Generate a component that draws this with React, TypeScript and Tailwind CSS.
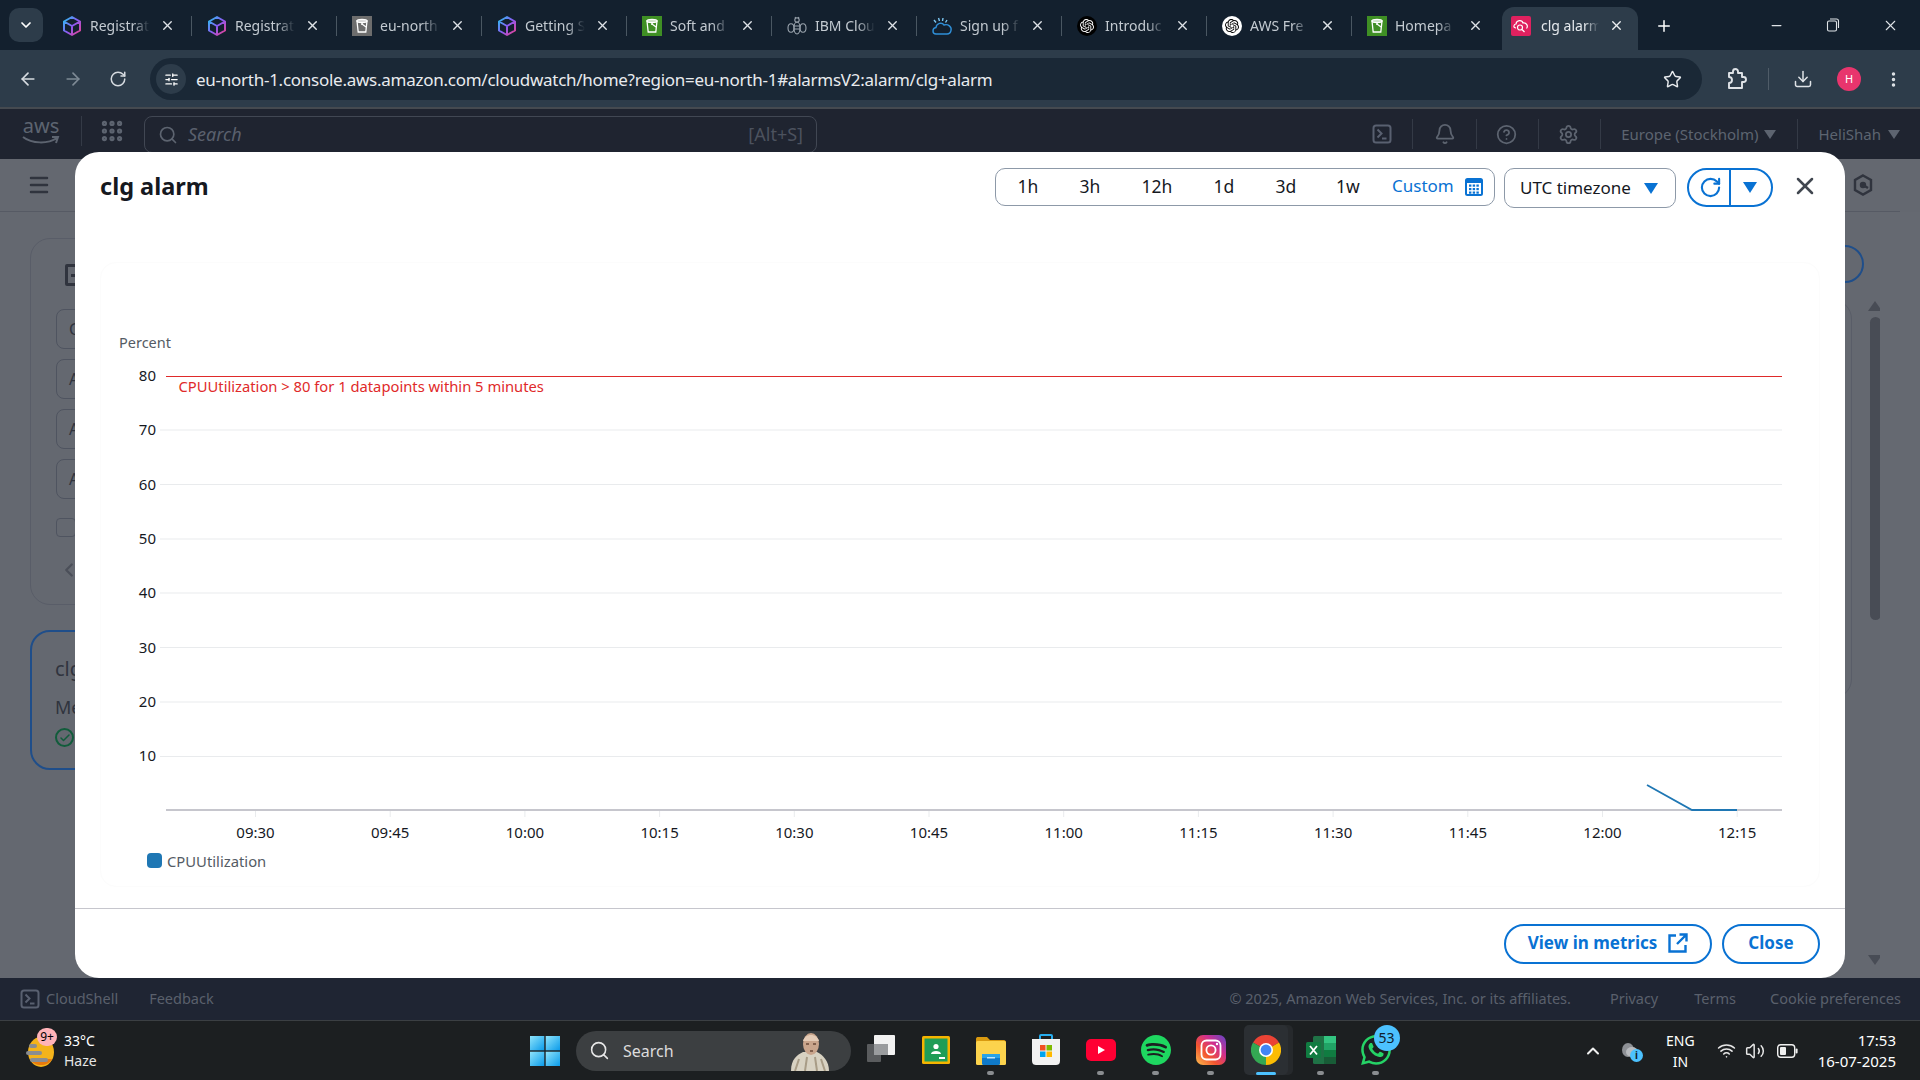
import React from "react";
import { ArrowLeft, ArrowRight, RotateCw, Star, Download, MoreVertical, Plus, X, Minus, ChevronDown, ChevronUp, ChevronLeft, Search, Bell, HelpCircle, Settings, Menu, Volume2, Wifi, SlidersHorizontal, Check, Grip } from "lucide-react";
import { SiOpenai, SiSpotify, SiWhatsapp } from "react-icons/si";

const FONT = { fontFamily: '"Noto Sans", "Open Sans", sans-serif' };

function Caret({ w, h, color, up }: { w: number; h: number; color: string; up?: boolean }) {
  return (
    <svg width={w} height={h} viewBox="0 0 10 10" preserveAspectRatio="none" className="block shrink-0">
      <path d={up ? "M0 10 L5 0 L10 10 Z" : "M0 0 L10 0 L5 10 Z"} fill={color} />
    </svg>
  );
}

function Cube() {
  return (
    <svg width="20" height="22" viewBox="0 0 20 22" fill="none">
      <defs>
        <linearGradient id="cubeg" x1="0" y1="0" x2="1" y2="1">
          <stop offset="0" stopColor="#22c6ee" />
          <stop offset="0.5" stopColor="#8a5cf6" />
          <stop offset="1" stopColor="#ec3f8c" />
        </linearGradient>
      </defs>
      <path d="M10 2 L18 6.5 V15.5 L10 20 L2 15.5 V6.5 Z M2 6.5 L10 11 L18 6.5 M10 11 V20" stroke="url(#cubeg)" strokeWidth="2" strokeLinejoin="round" />
    </svg>
  );
}
function Bucket({ bg }: { bg: string }) {
  return (
    <svg width="20" height="20" viewBox="0 0 20 20">
      <rect width="20" height="20" fill={bg} />
      <path d="M5 5 H15 L13.8 16 H6.2 Z" fill="none" stroke="#fff" strokeWidth="1.3" />
      <ellipse cx="10" cy="5" rx="5" ry="1.6" fill="none" stroke="#fff" strokeWidth="1.2" />
      <path d="M10 8 L14 11" stroke="#fff" strokeWidth="1.2" />
      <circle cx="10" cy="8" r="1" fill="#fff" />
    </svg>
  );
}
function Bee() {
  return (
    <svg width="22" height="22" viewBox="0 0 22 22" fill="none" stroke="#9aa3ad" strokeWidth="1.1">
      <circle cx="11" cy="5" r="2.2" />
      <ellipse cx="11" cy="13" rx="3" ry="6" />
      <path d="M8 11 H14 M8 14 H14" />
      <ellipse cx="5" cy="13" rx="3" ry="4.2" />
      <ellipse cx="17" cy="13" rx="3" ry="4.2" />
      <path d="M9 2 L10 3.5 M13 2 L12 3.5" />
    </svg>
  );
}
function CloudFav() {
  return (
    <svg width="22" height="22" viewBox="0 0 22 22" fill="none" stroke="#2f8fd8" strokeWidth="1.4">
      <path d="M5 19 C1 19 1 13 5 12.5 C5.5 8 11 7 13 10 C17 8.5 21 12 20 15.5 C19.5 18 18 19 16 19 Z" />
      <path d="M3 5 L5 7.5 M7.5 3 L8.5 6 M12 3 L11.5 6 M16 5 L14.5 7.5" stroke="#7cc7f2" />
    </svg>
  );
}
function Knot({ dark }: { dark: boolean }) {
  return (
    <span className={`flex h-[20px] w-[20px] items-center justify-center rounded-full ${dark ? "bg-black text-white" : "bg-white text-black"}`}>
      <SiOpenai size={14} />
    </span>
  );
}
function WatchFav() {
  return (
    <svg width="20" height="20" viewBox="0 0 20 20">
      <rect width="20" height="20" rx="2" fill="#e0215f" />
      <path d="M5 12 C2 12 2.5 8 5 8 C5.5 4 11 3.5 12 7 C15.5 6.5 17.5 10 15.5 12.5" fill="none" stroke="#fff" strokeWidth="1.2" />
      <circle cx="9" cy="11.5" r="2.5" fill="none" stroke="#fff" strokeWidth="1.2" />
      <path d="M11 13.5 L13.5 16" stroke="#fff" strokeWidth="1.2" />
    </svg>
  );
}

const tabs: { label: string; icon: React.ReactNode }[] = [
  { label: "Registrat", icon: <Cube /> },
  { label: "Registrat", icon: <Cube /> },
  { label: "eu-north", icon: <Bucket bg="#6d6d6d" /> },
  { label: "Getting S", icon: <Cube /> },
  { label: "Soft and", icon: <Bucket bg="#3f8f24" /> },
  { label: "IBM Clou", icon: <Bee /> },
  { label: "Sign up f", icon: <CloudFav /> },
  { label: "Introduc", icon: <Knot dark /> },
  { label: "AWS Fre", icon: <Knot dark={false} /> },
  { label: "Homepa", icon: <Bucket bg="#3f8f24" /> },
];

function Tab({ label, icon, last }: { label: string; icon: React.ReactNode; last: boolean }) {
  return (
    <div className="flex h-[43px] w-[145px] shrink-0 items-center pb-[6px] pl-[14px] pr-[14px]">
      <span className="flex w-[22px] shrink-0 justify-center">{icon}</span>
      <span className="ml-[7px] w-[60px] whitespace-nowrap text-[14px] text-[#c3cad1] [mask-image:linear-gradient(to_right,black_70%,transparent_100%)]">{label}</span>
      <X size={15} strokeWidth={2.2} className="ml-auto text-[#dfe3e7]" />
      {!last && <span className="ml-[16px] -mr-[14px] h-[20px] w-px bg-[#4a5762]" />}
    </div>
  );
}

function TabBar() {
  return (
    <div className="flex h-[50px] shrink-0 items-end bg-[#13202e] pl-[9px]">
      <div className="mb-[8px] mr-[4px] flex h-[34px] w-[34px] items-center justify-center rounded-[10px] bg-[#2d3c4a]">
        <ChevronDown size={16} strokeWidth={2.6} className="text-white" />
      </div>
      <div className="flex">
        {tabs.map((t, i) => (
          <Tab key={i} label={t.label} icon={t.icon} last={i === tabs.length - 1} />
        ))}
      </div>
      <div className="ml-[5px] flex h-[43px] w-[136px] shrink-0 items-center rounded-t-[12px] bg-[#2d3c4a] pb-[6px] pl-[9px] pr-[14px]">
        <WatchFav />
        <span className="ml-[10px] w-[58px] whitespace-nowrap text-[14px] text-[#e4e8ec] [mask-image:linear-gradient(to_right,black_75%,transparent_100%)]">clg alarm</span>
        <X size={15} strokeWidth={2.2} className="ml-auto text-[#eef0f2]" />
      </div>
      <div className="flex h-[43px] w-[52px] items-center justify-center pb-[6px]">
        <Plus size={18} strokeWidth={2} className="text-white" />
      </div>
      <div className="ml-auto flex h-[50px] items-center pr-[21px] text-[#dfe3e7]">
        <Minus size={15} className="mr-[42px]" />
        <svg width="14" height="14" viewBox="0 0 14 14" fill="none" stroke="currentColor" strokeWidth="1.1" className="mr-[42px]">
          <rect x="1.5" y="3" width="9" height="10" rx="1.5" />
          <path d="M4 1 H10.5 A2 2 0 0 1 12.5 3 V10" />
        </svg>
        <X size={17} strokeWidth={1.5} />
      </div>
    </div>
  );
}

function ExtIcon() {
  return (
    <svg width="22" height="24" viewBox="0 0 22 24" fill="none" stroke="currentColor" strokeWidth="1.9" strokeLinejoin="round">
      <path d="M4 6 H8 V4.5 A2.5 2.5 0 0 1 13 4.5 V6 H17 V10 H18.5 A2.5 2.5 0 0 1 18.5 15 H17 V21 H4 V16 C6 16 7 14.5 7 13 C7 11.5 6 10 4 10 Z" />
    </svg>
  );
}

function Toolbar() {
  return (
    <div className="flex h-[59px] shrink-0 items-start border-b-2 border-[#454a50] bg-[#2d3c4a] pt-[8px]">
      <div className="flex h-[42px] w-[150px] shrink-0 items-center pl-[18px] text-[#d6dbe0]">
        <ArrowLeft size={20} strokeWidth={2} />
        <ArrowRight size={20} strokeWidth={2} className="ml-[25px] text-[#7e8a95]" />
        <RotateCw size={18} strokeWidth={2} className="ml-[26px]" />
      </div>
      <div className="flex h-[42px] w-[1552px] shrink-0 items-center rounded-full bg-[#1a2836] pl-[6px] pr-[20px]">
        <span className="flex h-[30px] w-[30px] items-center justify-center rounded-full bg-[#2d3c4a]">
          <SlidersHorizontal size={15} className="text-white" />
        </span>
        <span className="ml-[10px] mt-[1px] text-[17px] tracking-[-0.26px] text-[#e8ebee]">eu-north-1.console.aws.amazon.com/cloudwatch/home?region=eu-north-1#alarmsV2:alarm/clg+alarm</span>
        <Star size={19} strokeWidth={1.8} className="ml-auto text-[#e8ebee]" />
      </div>
      <div className="flex h-[42px] flex-1 items-center pl-[23px] text-[#dfe3e7]">
        <ExtIcon />
        <span className="ml-[21px] h-[22px] w-px bg-[#4f5c68]" />
        <Download size={20} strokeWidth={1.8} className="ml-[24px]" />
        <span className="ml-[24px] flex h-[24px] w-[24px] items-center justify-center rounded-full bg-[#e8356d] text-[11px] text-white">H</span>
        <MoreVertical size={19} strokeWidth={2.4} className="ml-[23px]" />
      </div>
    </div>
  );
}

function NavSep() {
  return <span className="block h-[30px] w-px bg-[#343a46]" />;
}

function TermIcon({ size = 20 }: { size?: number }) {
  return (
    <svg width={size} height={size} viewBox="0 0 20 20" fill="none" stroke="#596070" strokeWidth="2">
      <rect x="1.5" y="1.5" width="17" height="17" rx="2.5" />
      <path d="M5.5 5.5 L9.5 9.5 L5.5 13.5 M10 14.5 H14.5" />
    </svg>
  );
}

function AwsNav() {
  return (
    <div className="flex h-[50px] shrink-0 items-start bg-[#1f2430] pt-[7px] text-[#5d6470]">
      <div className="relative ml-[22px] w-[38px] text-center">
        <div className="text-[20px] leading-[20px] text-[#5d6470]">aws</div>
        <svg width="38" height="10" viewBox="0 0 38 10" fill="none" className="absolute left-0 top-[19px]">
          <path d="M1 2 C10 9 26 9 35 3 M30 2 L36 2 L34 8" stroke="#5d6470" strokeWidth="2" />
        </svg>
      </div>
      <span className="ml-[21px] h-[30px] w-px bg-[#343a46]" />
      <Grip size={26} strokeWidth={2.8} className="ml-[17px] mt-[2px]" />
      <div className="ml-[19px] flex h-[37px] w-[673px] items-center rounded-[8px] border border-[#414753] px-[13px]">
        <Search size={20} strokeWidth={2} />
        <span className="ml-[10px] text-[18px] italic text-[#5a606d]">Search</span>
        <span className="ml-auto text-[18px] text-[#4c525e]">[Alt+S]</span>
      </div>
      <div className="ml-auto mt-[3px] flex h-[30px] items-center">
        <TermIcon />
        <span className="ml-[20px]"><NavSep /></span>
        <Bell size={22} strokeWidth={2} className="ml-[21px]" />
        <span className="ml-[20px]"><NavSep /></span>
        <HelpCircle size={21} strokeWidth={2} className="ml-[19px]" />
        <span className="ml-[21px]"><NavSep /></span>
        <Settings size={21} strokeWidth={2} className="ml-[19px]" />
        <span className="ml-[21px]"><NavSep /></span>
        <span className="ml-[20px] text-[15px]">Europe (Stockholm)</span>
        <span className="ml-[6px]"><Caret w={12} h={9} color="#5d6470" /></span>
        <span className="ml-[21px]"><NavSep /></span>
        <span className="ml-[20px] text-[15px]">HeliShah</span>
        <span className="ml-[7px] mr-[20px]"><Caret w={12} h={9} color="#5d6470" /></span>
      </div>
    </div>
  );
}

function PageBehind() {
  return (
    <div className="flex h-full flex-1 flex-col bg-[#646870]">
      <div className="flex h-[53px] w-[1900px] shrink-0 items-center justify-between border-b border-[#565a64] pl-[27px] pr-[27px]">
        <Menu size={24} strokeWidth={2.5} className="text-[#30343e]" />
        <svg width="20" height="22" viewBox="0 0 20 22" fill="none" stroke="#30343e" strokeWidth="2.4">
          <path d="M10 1.5 L18 6 V16 L10 20.5 L2 16 V6 Z" />
          <circle cx="10" cy="11" r="2" fill="#30343e" />
          <path d="M10 11 L15 14" />
        </svg>
      </div>
      <div className="flex flex-1">
        <div className="ml-[30px] w-[900px] shrink-0 pt-[26px]">
          <div className="h-[367px] rounded-[20px] border border-[#595d68] pl-[25px] pr-[20px] pt-[25px]">
            <div className="ml-[9px] flex h-[22px] w-[22px] items-center justify-center rounded-[2px] border-[3px] border-[#30343e]">
              <span className="h-[3px] w-[10px] bg-[#30343e]" />
            </div>
            <div className="mt-[23px] flex flex-col gap-[10px]">
              {["C", "A", "A", "A"].map((l, i) => (
                <div key={i} className="flex h-[40px] items-center rounded-[8px] border border-[#4f5460] pl-[12px] text-[16px] text-[#30343e]">{l}</div>
              ))}
            </div>
            <div className="mt-[19px] h-[19px] w-[20px] rounded-[4px] border border-[#4f5460]" />
            <ChevronLeft size={22} strokeWidth={2.5} className="ml-[2px] mt-[22px] text-[#4b4f59]" />
          </div>
          <div className="mt-[25px] h-[140px] rounded-[20px] border-2 border-[#1f4e8a] pl-[23px] pt-[23px] text-[#30343e]">
            <div className="text-[20px] leading-[28px]">clg</div>
            <div className="mt-[12px] text-[18px] leading-[24px]">Me</div>
            <span className="mt-[9px] flex h-[19px] w-[19px] items-center justify-center rounded-full border-2 border-[#115c3b]">
              <Check size={12} strokeWidth={3} className="text-[#115c3b]" />
            </span>
          </div>
        </div>
        <div className="-mr-[3px] flex flex-1 flex-col items-end pt-[33px]">
          <div className="h-[38px] w-[400px] rounded-full border-2 border-[#1f4e8a]" />
          <div className="mr-[12px] mt-[16px] h-[400px] w-[400px] rounded-[20px] border border-[#595d68]" />
        </div>
        <div className="flex w-[19px] shrink-0 flex-col items-center pl-[9px] pt-[89px]">
          <Caret w={14} h={10} color="#484c55" up />
          <div className="mt-[6px] h-[303px] w-[11px] shrink-0 rounded-full bg-[#484c55]" />
          <div className="mt-[335px]"><Caret w={14} h={10} color="#484c55" /></div>
        </div>
        <div className="w-[40px] shrink-0 bg-[#656971]" />
      </div>
    </div>
  );
}

function RangeBtn({ label }: { label: string }) {
  return <span className="flex w-[62px] justify-center text-[17.5px] text-[#16191f]">{label}</span>;
}

function Calendar() {
  return (
    <svg width="18" height="18" viewBox="0 0 18 18">
      <rect x="1" y="1" width="16" height="16" rx="1.5" fill="none" stroke="#0972d3" strokeWidth="2" />
      <rect x="1" y="1" width="16" height="4" fill="#0972d3" />
      {[6.5, 10, 13.5].map((y) =>
        [4, 7.7, 11.4].map((x) => <rect key={`${x}-${y}`} x={x} y={y} width="2.4" height="2.2" fill="#0972d3" />)
      )}
    </svg>
  );
}

const yTicks: [string, number, number][] = [
  ["70", 430, 5],
  ["60", 484.5, 5],
  ["50", 539, 5],
  ["40", 593, 5],
  ["30", 647.5, 5],
  ["20", 702, 5],
  ["10", 756.5, 4],
];
const xTicks = ["09:30", "09:45", "10:00", "10:15", "10:30", "10:45", "11:00", "11:15", "11:30", "11:45", "12:00", "12:15"];

function Chart() {
  return (
    <svg width="1720" height="625" viewBox="100 262 1720 625" className="block">
      <text x="119" y="348" fontSize="14.5" fill="#545b64">Percent</text>
      <line x1="166" x2="1782" y1="376.5" y2="376.5" stroke="#df2a2a" strokeWidth="1.2" />
      <text x="156" y="380.5" textAnchor="end" fontSize="15" fill="#16191f">80</text>
      <text x="178.5" y="391.5" fontSize="14.75" fill="#df2a2a">CPUUtilization &gt; 80 for 1 datapoints within 5 minutes</text>
      {yTicks.map(([l, y, d]) => (
        <g key={l}>
          <line x1="160" x2="1782" y1={y} y2={y} stroke="#e9ebed" strokeWidth="1" />
          <text x="156" y={y + d} textAnchor="end" fontSize="15" fill="#16191f">{l}</text>
        </g>
      ))}
      <line x1="166" x2="1782" y1="810" y2="810" stroke="#c6c6cd" strokeWidth="2" />
      {xTicks.map((l, i) => {
        const x = 255.5 + i * 134.7;
        return (
          <g key={l}>
            <line x1={x} x2={x} y1="811" y2="817" stroke="#e9ebed" strokeWidth="1" />
            <text x={x} y="838" textAnchor="middle" fontSize="15" fill="#16191f">{l}</text>
          </g>
        );
      })}
      <polyline points="1647,785 1692,810 1737,810" fill="none" stroke="#1f77b4" strokeWidth="1.8" />
      <rect x="147" y="853" width="15" height="15" rx="4" fill="#1f77b4" />
      <text x="167" y="867" fontSize="14.8" fill="#545b64">CPUUtilization</text>
    </svg>
  );
}

function OpenIcon() {
  return (
    <svg width="20" height="20" viewBox="0 0 20 20" fill="none" stroke="currentColor" strokeWidth="2.4" className="ml-[11px]">
      <path d="M8 2.5 H1.5 V18.5 H17.5 V12" />
      <path d="M11.5 1.5 H18.5 V8.5 M18.5 1.5 L9 11" />
    </svg>
  );
}

function Modal() {
  return (
    <div className="absolute left-[75px] top-[152px] z-10 flex h-[826px] w-[1770px] flex-col rounded-[24px] bg-white">
      <div className="flex h-[110px] shrink-0 items-start pt-[16px]">
        <h1 className="ml-[25px] text-[23.5px] font-bold leading-[36px] text-[#16191f]">clg alarm</h1>
        <div className="ml-auto flex h-[38px] w-[500px] items-center rounded-[10px] border border-[#8d99a8] pb-[2px] pl-[1px]">
          <RangeBtn label="1h" />
          <RangeBtn label="3h" />
          <span className="flex w-[72px] justify-center text-[17.5px] text-[#16191f]">12h</span>
          <RangeBtn label="1d" />
          <RangeBtn label="3d" />
          <RangeBtn label="1w" />
          <span className="ml-[13px] text-[17px] text-[#0972d3]">Custom</span>
          <span className="ml-[11px] mt-[2px]"><Calendar /></span>
        </div>
        <div className="ml-[9px] flex h-[40px] w-[172px] items-center rounded-[10px] border border-[#8d99a8] pl-[15px]">
          <span className="text-[17px] text-[#16191f]">UTC timezone</span>
          <span className="ml-[13px]"><Caret w={14} h={11} color="#0972d3" /></span>
        </div>
        <div className="ml-[11px] flex h-[39px] w-[86px] items-center rounded-full border-2 border-[#0972d3]">
          <span className="flex h-full w-[42px] items-center justify-center border-r-2 pl-[2px] border-[#0972d3]">
            <RotateCw size={23} strokeWidth={2.2} className="text-[#0972d3]" />
          </span>
          <span className="flex flex-1 items-center justify-center pr-[3px]"><Caret w={14} h={11} color="#0972d3" /></span>
        </div>
        <X size={28} strokeWidth={2.2} className="ml-[18px] mr-[26px] mt-[4px] text-[#414750]" />
      </div>
      <div className="mx-[25px] h-[625px] shrink-0 rounded-[16px] border border-[#fcfcfc]">
        <div className="-m-px"><Chart /></div>
      </div>
      <div className="mt-[21px] flex flex-1 items-start justify-end border-t border-[#c6c6cd] pr-[25px] pt-[15px]">
        <button className="flex h-[40px] w-[208px] items-center justify-center rounded-full border-2 border-[#0972d3] pb-[2px] text-[17px] font-bold text-[#0972d3]">
          View in metrics
          <OpenIcon />
        </button>
        <button className="ml-[10px] flex h-[40px] w-[98px] items-center justify-center rounded-full border-2 border-[#0972d3] pb-[2px] text-[17px] font-bold text-[#0972d3]">Close</button>
      </div>
    </div>
  );
}

function Footer() {
  return (
    <div className="relative z-20 flex h-[42px] shrink-0 items-center bg-[#1f2533] pl-[20px] pr-[19px] text-[14.5px] text-[#5a606c]">
      <TermIcon />
      <span className="ml-[6px]">CloudShell</span>
      <span className="ml-[31px]">Feedback</span>
      <span className="ml-auto">© 2025, Amazon Web Services, Inc. or its affiliates.</span>
      <span className="ml-[39px]">Privacy</span>
      <span className="ml-[36px]">Terms</span>
      <span className="ml-[34px]">Cookie preferences</span>
    </div>
  );
}

function Dot({ active }: { active?: boolean }) {
  return active ? (
    <span className="absolute bottom-[5px] h-[3px] w-[20px] rounded-full bg-[#4cc2ff]" />
  ) : (
    <span className="absolute bottom-[5px] h-[4px] w-[7px] rounded-full bg-[#8a8d90]" />
  );
}

function TaskIcon({ children, dot, active }: { children: React.ReactNode; dot?: boolean; active?: boolean }) {
  return (
    <div className="relative flex h-[59px] w-[55px] shrink-0 items-center justify-center">
      {active && <div className="absolute left-[6px] top-[4px] h-[50px] w-[44px] rounded-[5px] bg-[#2b2f33] shadow-[5px_0_0_#26292c]" />}
      <div className="relative mb-[2px]">{children}</div>
      {(dot || active) && <Dot active={active} />}
    </div>
  );
}

function WinLogo() {
  return (
    <svg width="30" height="30" viewBox="0 0 30 30">
      <defs>
        <linearGradient id="wing" x1="0" y1="0" x2="1" y2="1">
          <stop offset="0" stopColor="#8fe4fb" />
          <stop offset="1" stopColor="#0a9bea" />
        </linearGradient>
      </defs>
      <rect x="0" y="0" width="14.3" height="14.3" fill="url(#wing)" />
      <rect x="15.7" y="0" width="14.3" height="14.3" fill="url(#wing)" />
      <rect x="0" y="15.7" width="14.3" height="14.3" fill="url(#wing)" />
      <rect x="15.7" y="15.7" width="14.3" height="14.3" fill="url(#wing)" />
    </svg>
  );
}

function Person() {
  return (
    <svg width="44" height="38" viewBox="0 0 44 38">
      <path d="M4 38 C4 26 10 22 16 19 L30 19 C36 22 42 28 42 38 Z" fill="#d8d2c2" />
      <path d="M8 38 L12 26 M18 38 L20 24 M30 38 L28 24 M38 38 L34 26" stroke="#a89c86" strokeWidth="2" />
      <ellipse cx="24" cy="11" rx="8" ry="11" fill="#c9a58c" />
      <path d="M16 8 C18 0 30 0 32 8" fill="#e4cbb6" />
      <path d="M19 11 H22 M26 11 H29 M23 18 H26" stroke="#6b4a38" strokeWidth="1.4" />
    </svg>
  );
}

function TaskView() {
  return (
    <svg width="32" height="30" viewBox="0 0 32 30">
      <rect x="2" y="9" width="14" height="18" rx="1" fill="#5a5c5e" />
      <rect x="9" y="0" width="21" height="20" rx="1" fill="#f2f2f2" />
      <rect x="9" y="9" width="14" height="11" fill="#9a9c9e" />
    </svg>
  );
}

function Classroom() {
  return (
    <svg width="28" height="28" viewBox="0 0 28 28">
      <rect width="28" height="28" rx="1.5" fill="#f5b400" />
      <rect x="2.5" y="2.5" width="23" height="23" fill="#1f9d57" />
      <circle cx="14" cy="10.5" r="2.6" fill="#fff" />
      <path d="M9 18 C9 14 19 14 19 18 Z" fill="#fff" />
      <rect x="17" y="21" width="6" height="2" fill="#fff" />
    </svg>
  );
}

function Explorer() {
  return (
    <svg width="30" height="30" viewBox="0 0 30 30">
      <path d="M0 4 C0 2.5 1 2 2 2 H11 L14 5 H28 C29 5 30 6 30 7 V12 H0 Z" fill="#d99a10" />
      <rect y="6" width="30" height="24" rx="1.5" fill="#fcd34d" />
      <rect x="6" y="19" width="18" height="11" rx="1.5" fill="#0f79c9" />
      <rect x="6" y="19" width="18" height="4" fill="#29a3e8" />
      <rect x="11" y="22" width="8" height="1.5" fill="#bfe6fb" />
    </svg>
  );
}

function Store() {
  return (
    <svg width="30" height="32" viewBox="0 0 30 32">
      <path d="M9 6 V2 C9 1 10 1 10 1 H20 C21 1 21 2 21 2 V6" fill="none" stroke="#27aef0" strokeWidth="2" />
      <path d="M1 5 H29 V27 C29 30 27 31 25 31 H5 C3 31 1 30 1 27 Z" fill="#f2f2f2" />
      <rect x="9" y="11" width="5.5" height="5.5" fill="#f25022" />
      <rect x="15.5" y="11" width="5.5" height="5.5" fill="#7fba00" />
      <rect x="9" y="17.5" width="5.5" height="5.5" fill="#00a4ef" />
      <rect x="15.5" y="17.5" width="5.5" height="5.5" fill="#ffb900" />
    </svg>
  );
}

function Youtube() {
  return (
    <svg width="30" height="22" viewBox="0 0 30 22">
      <rect width="30" height="22" rx="5" fill="#ff0033" />
      <path d="M12 7 L19 11 L12 15 Z" fill="#fff" />
    </svg>
  );
}

function Instagram() {
  return (
    <svg width="30" height="30" viewBox="0 0 30 30">
      <defs>
        <linearGradient id="ig" x1="0" y1="1" x2="1" y2="0">
          <stop offset="0" stopColor="#fdc04f" />
          <stop offset="0.35" stopColor="#f2552f" />
          <stop offset="0.65" stopColor="#d12f8e" />
          <stop offset="1" stopColor="#5f47c9" />
        </linearGradient>
      </defs>
      <rect width="30" height="30" rx="7" fill="url(#ig)" />
      <rect x="5.5" y="5.5" width="19" height="19" rx="5" fill="none" stroke="#fff" strokeWidth="1.8" />
      <circle cx="15" cy="15" r="4.6" fill="none" stroke="#fff" strokeWidth="1.8" />
      <circle cx="21" cy="9" r="1.2" fill="#fff" />
    </svg>
  );
}

function Chrome() {
  return (
    <svg width="30" height="30" viewBox="0 0 30 30">
      <path d="M15 15 L2 7.5 A15 15 0 0 1 28 7.5 Z" fill="#ea4335" />
      <path d="M15 15 L28 7.5 A15 15 0 0 1 15 30 Z" fill="#fbbc04" />
      <path d="M15 15 L15 30 A15 15 0 0 1 2 7.5 Z" fill="#34a853" />
      <circle cx="15" cy="15" r="7" fill="#fff" />
      <circle cx="15" cy="15" r="5.4" fill="#4285f4" />
    </svg>
  );
}

function Excel() {
  return (
    <svg width="30" height="30" viewBox="0 0 30 30">
      <rect x="7" y="1" width="23" height="28" rx="1.5" fill="#1f7246" />
      <rect x="18" y="1" width="12" height="7" fill="#33c481" />
      <rect x="18" y="8" width="12" height="7" fill="#21a366" />
      <rect x="18" y="15" width="12" height="7" fill="#107c41" />
      <rect x="18" y="22" width="12" height="7" fill="#185c37" />
      <rect x="0" y="7" width="15" height="16" rx="1.5" fill="#107c41" />
      <path d="M4 11 L11 19.5 M11 11 L4 19.5" stroke="#fff" strokeWidth="1.8" />
    </svg>
  );
}

function Taskbar() {
  return (
    <div className="relative z-20 flex h-[60px] shrink-0 items-center border-t border-[#3b3f43] bg-[#1c1f21] text-white">
      <div className="flex h-full w-[530px] shrink-0 items-center pl-[26px]">
        <div className="relative">
          <svg width="30" height="36" viewBox="0 0 30 36">
            <ellipse cx="15" cy="19" rx="13" ry="15" fill="#f3b31b" />
            <path d="M4 26 C8 34 22 34 26 26 Z" fill="#e8790f" />
            <rect x="0" y="18" width="16" height="4" rx="2" fill="#8a8d90" />
            <rect x="4" y="25" width="18" height="4" rx="2" fill="#8a8d90" />
            <rect x="3" y="11" width="8" height="4" rx="2" fill="#8a8d90" />
          </svg>
          <span className="absolute left-[11px] top-[-5px] flex h-[18px] w-[20px] items-center justify-center rounded-full bg-[#ffb3b8] text-[12px] text-black">9+</span>
        </div>
        <div className="ml-[8px] flex flex-col text-[14px] leading-[20px]">
          <span>33°C</span>
          <span className="text-[#e5e5e5]">Haze</span>
        </div>
      </div>
      <div className="flex w-[46px] shrink-0 items-center"><WinLogo /></div>
      <div className="flex h-[40px] w-[275px] shrink-0 items-center overflow-hidden rounded-full bg-[#3c3f41] pl-[13px] pr-[20px]">
        <Search size={21} strokeWidth={1.8} className="text-[#e6e6e6]" />
        <span className="ml-[13px] text-[16px] text-[#dcdcdc]">Search</span>
        <span className="ml-auto mt-[2px]"><Person /></span>
      </div>
      <TaskIconRow />
      <div className="ml-auto flex h-full items-center pr-[24px]">
        <ChevronUp size={20} strokeWidth={2.4} className="text-[#f0f0f0]" />
        <span className="relative ml-[17px] block h-[20px] w-[22px]">
          <svg width="20" height="18" viewBox="0 0 20 18"><ellipse cx="8" cy="9" rx="6" ry="7" fill="#8d9095" /><ellipse cx="12" cy="11" rx="6" ry="5" fill="#b8bbbf" /></svg>
          <span className="absolute -right-[1px] bottom-[-1px] flex h-[13px] w-[13px] items-center justify-center rounded-full bg-[#4cc2ff] text-[10px] font-bold leading-none text-[#123]">i</span>
        </span>
        <div className="ml-[24px] flex flex-col items-center text-[14px] leading-[21px]">
          <span>ENG</span>
          <span>IN</span>
        </div>
        <Wifi size={19} strokeWidth={2} className="ml-[22px] text-[#e6e6e6]" />
        <Volume2 size={20} strokeWidth={1.8} className="ml-[9px] text-[#e6e6e6]" />
        <svg width="21" height="14" viewBox="0 0 21 14" className="ml-[12px]">
          <rect x="0.7" y="0.7" width="17" height="12.6" rx="3" fill="none" stroke="#f0f0f0" strokeWidth="1.4" />
          <rect x="3" y="3" width="6" height="8" rx="1" fill="#f0f0f0" />
          <rect x="18.6" y="4.5" width="2" height="5" rx="1" fill="#f0f0f0" />
        </svg>
        <div className="ml-[20px] flex flex-col items-end text-[15px] leading-[21px]">
          <span>17:53</span>
          <span>16-07-2025</span>
        </div>
      </div>
    </div>
  );
}

function TaskIconRow() {
  return (
    <div className="ml-[2px] flex">
      <TaskIcon><TaskView /></TaskIcon>
      <TaskIcon><Classroom /></TaskIcon>
      <TaskIcon dot><Explorer /></TaskIcon>
      <TaskIcon><Store /></TaskIcon>
      <TaskIcon dot><Youtube /></TaskIcon>
      <TaskIcon dot><SiSpotify size={30} color="#1ed760" /></TaskIcon>
      <TaskIcon dot><Instagram /></TaskIcon>
      <TaskIcon active><Chrome /></TaskIcon>
      <TaskIcon dot><Excel /></TaskIcon>
      <TaskIcon dot>
        <span className="relative block">
          <SiWhatsapp size={30} color="#25d366" />
          <span className="absolute left-[13px] top-[-10px] flex h-[26px] w-[26px] items-center justify-center rounded-full bg-[#4cc2ff] text-[14px] text-[#10202c]">53</span>
        </span>
      </TaskIcon>
    </div>
  );
}

export default function App() {
  return (
    <div className="flex h-[1080px] w-[1920px] flex-col overflow-hidden" style={FONT}>
      <TabBar />
      <Toolbar />
      <AwsNav />
      <div className="flex min-h-0 flex-1 bg-[#646870]">
        <PageBehind />
      </div>
      <Modal />
      <Footer />
      <Taskbar />
    </div>
  );
}
